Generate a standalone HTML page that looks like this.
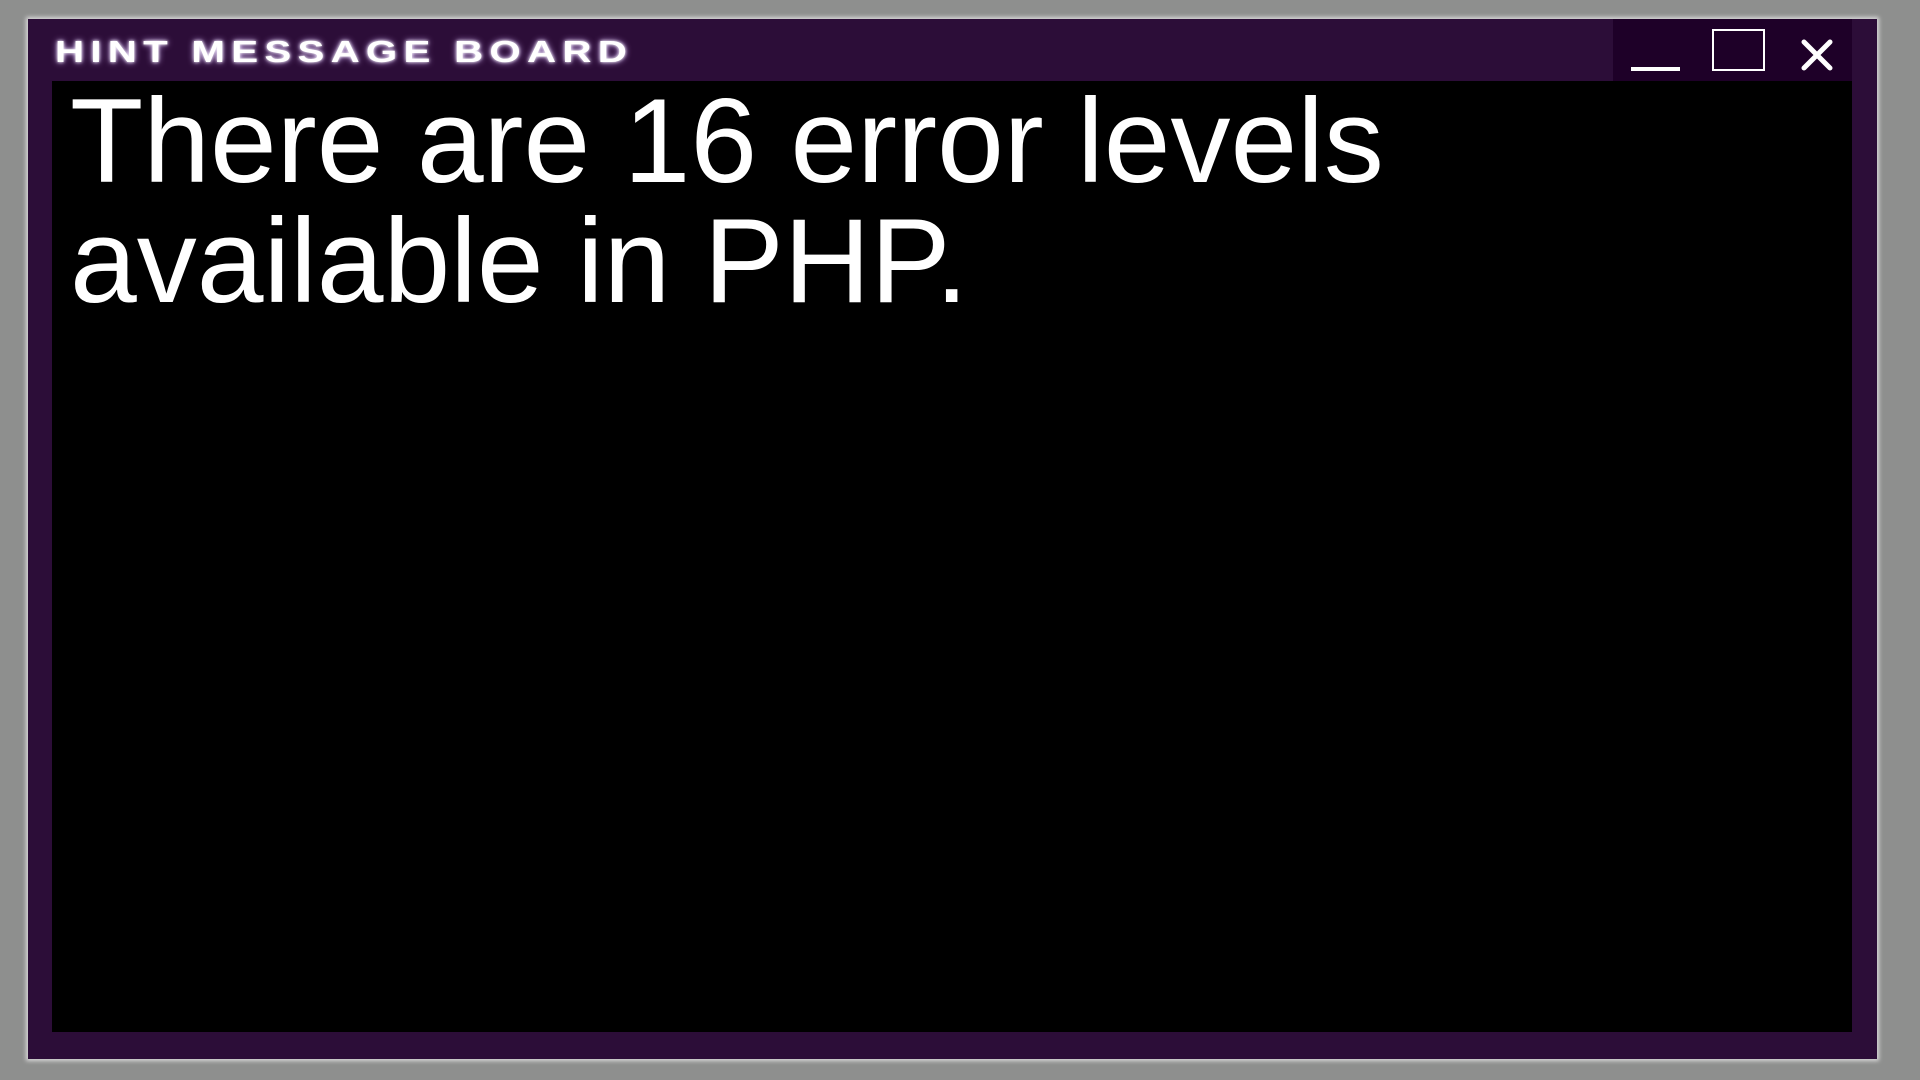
<!DOCTYPE html>
<html><head><meta charset="utf-8"><style>
html,body{margin:0;padding:0;width:1920px;height:1080px;background:#8e8f8e;overflow:hidden}
.win{position:absolute;left:28px;top:19px;width:1849px;height:1040px;background:#2c0d38;box-shadow:0 0 4px 2px #d8d8d8}
.title{position:absolute;left:27px;top:17px;font-family:"Liberation Sans",sans-serif;font-weight:bold;font-size:31px;letter-spacing:4.8px;color:#fff;text-shadow:0 0 3px #fff,0 0 6px #d9b8ff;white-space:nowrap;line-height:32px;transform:scaleX(1.3);transform-origin:0 0}
.btns{position:absolute;left:1585px;top:0;width:239px;height:62px;background:#1e0028}
.min{position:absolute;left:18px;top:48px;width:49px;height:4px;background:#fff}
.max{position:absolute;left:99px;top:10px;width:49px;height:38px;border:2px solid #fff}
.x{position:absolute;left:188px;top:20px;width:32px;height:32px}
.content{position:absolute;left:24px;top:62px;width:1800px;height:951px;background:#000}
.text{position:absolute;left:18px;top:0px;font-family:"Liberation Sans",sans-serif;font-size:120px;line-height:120px;color:#fff;white-space:nowrap}
</style></head><body>
<div class="win">
<div class="title">HINT MESSAGE BOARD</div>
<div class="btns">
<div class="min"></div>
<div class="max"></div>
<svg class="x" viewBox="0 0 32 32"><path d="M3 3 L29 29 M29 3 L3 29" stroke="#fff" stroke-width="5" stroke-linecap="round"/></svg>
</div>
<div class="content"><div class="text">There are 16 error levels<br>available in PHP.</div></div>
</div>
</body></html>
